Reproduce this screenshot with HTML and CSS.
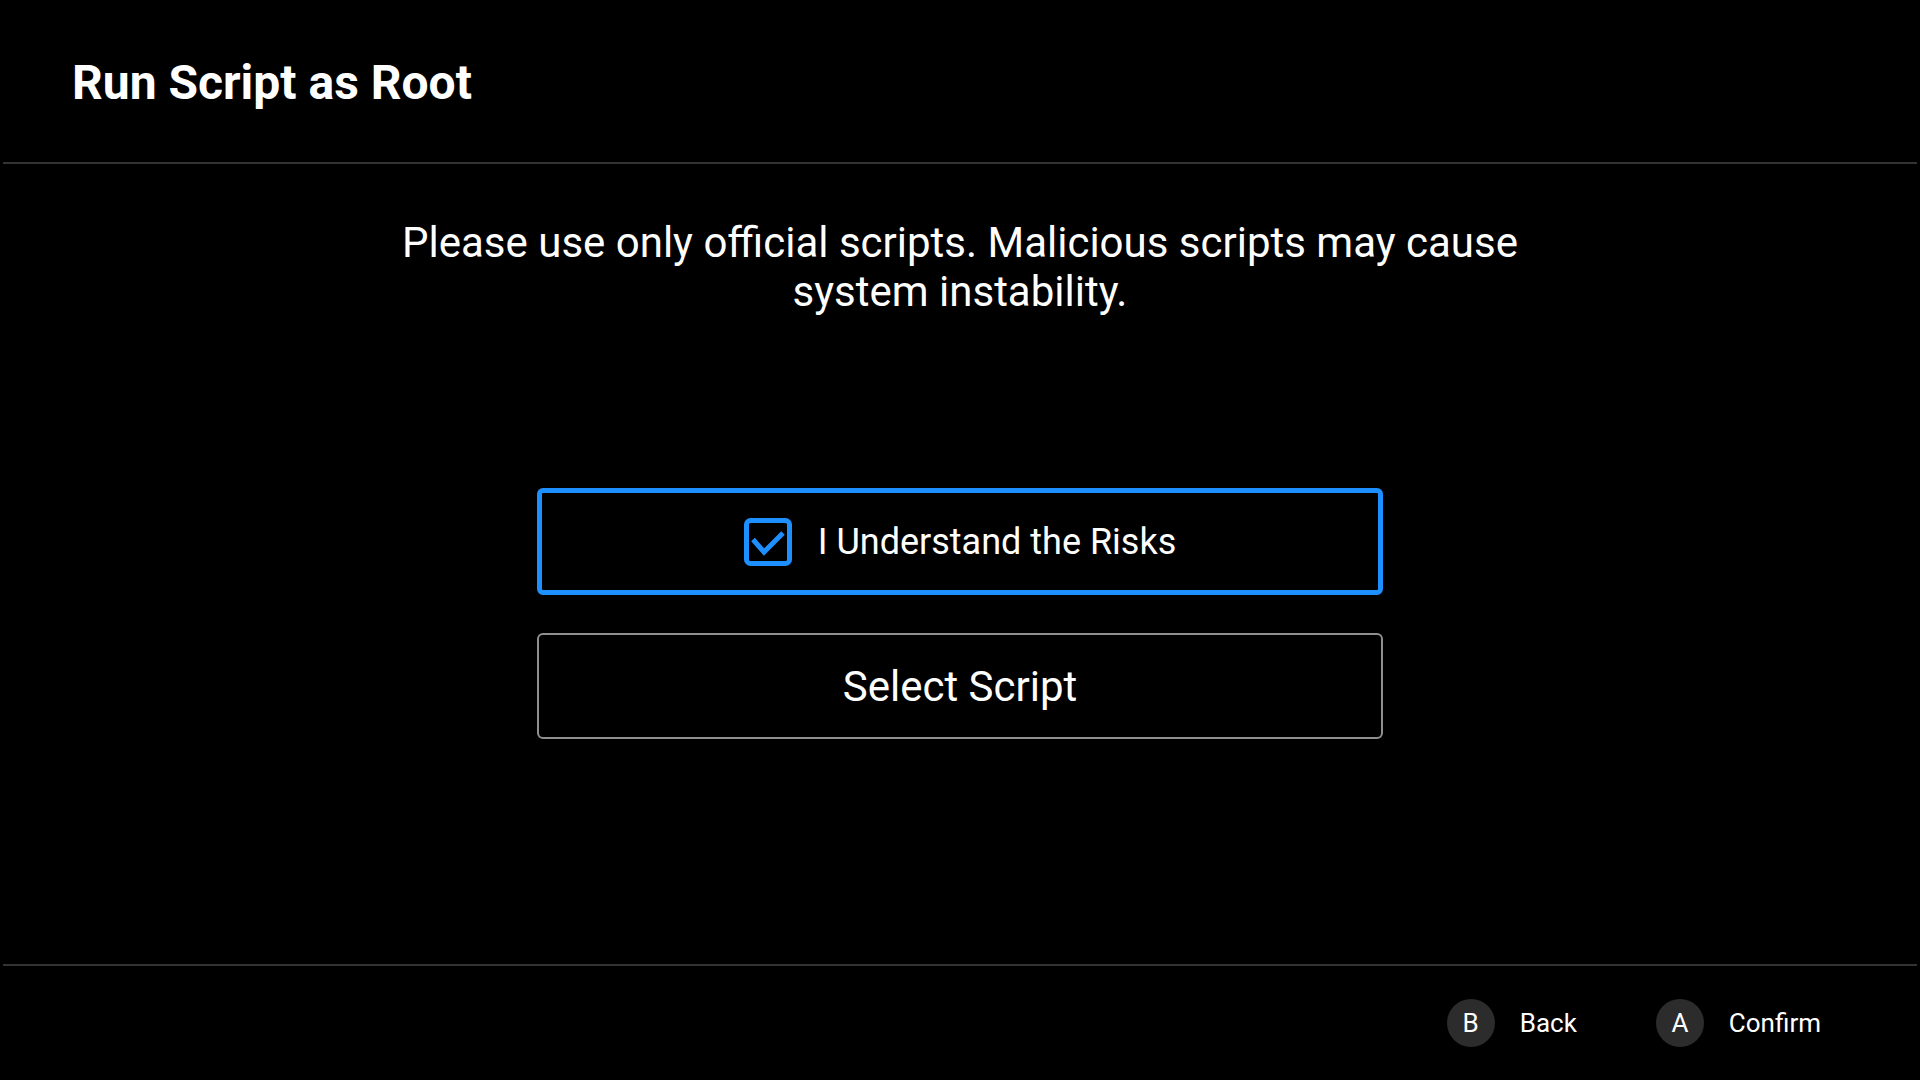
FILE: index.html
```html
<!DOCTYPE html>
<html lang="en">
<head>
    <meta charset="UTF-8">
    <meta name="viewport" content="width=device-width, initial-scale=1.0">
    <title>Run Script as Root</title>
    <link rel="stylesheet" href="styles.css">
</head>
<body>
    <div class="screen">
        <div class="header">
            <h1>Run Script as Root</h1>
        </div>

        <div class="content">
            <p class="warning">Please use only official scripts. Malicious scripts may cause system instability.</p>

            <div class="options">
                <button class="option focused">
                    <svg class="checkbox" width="48" height="48" viewBox="0 0 48 48">
                        <rect x="2.5" y="2.5" width="43" height="43" rx="4" fill="none" stroke="#1e8fff" stroke-width="5"/>
                        <polyline points="9,21.5 20,34 39,15" fill="none" stroke="#1e8fff" stroke-width="5"/>
                    </svg>
                    <span>I Understand the Risks</span>
                </button>
                <button class="option big">Select Script</button>
            </div>
        </div>

        <div class="footer">
            <div class="hint"><span class="key">B</span>Back</div>
            <div class="hint"><span class="key">A</span>Confirm</div>
        </div>
    </div>
</body>
</html>
```
FILE: styles.css
```css
body {
    margin: 0;
    background: #000;
    color: #fff;
    font-family: Roboto, "Noto Sans", sans-serif;
}
.screen {
    width: 1920px;
    height: 1080px;
    display: flex;
    flex-direction: column;
}
.header {
    height: 164px;
    margin: 0 3px;
    border-bottom: 2px solid #333;
    box-sizing: border-box;
}
.header h1 {
    margin: 0;
    padding: 56px 0 0 69px;
    font-size: 48px;
    line-height: 54px;
    font-weight: 700;
}
.content {
    flex: 1;
    display: flex;
    flex-direction: column;
    align-items: center;
}
.warning {
    max-width: 1160px;
    margin: 54px 0 0;
    text-align: center;
    font-size: 42px;
    line-height: 49px;
}
.options {
    margin-top: 172px;
    display: flex;
    flex-direction: column;
    gap: 38px;
}
.option {
    width: 846px;
    height: 107px;
    background: #000;
    color: #fff;
    font-family: inherit;
    border: 2px solid #8f8f8f;
    border-radius: 6px;
    display: flex;
    align-items: center;
    justify-content: center;
    gap: 26px;
    font-size: 36px;
    padding: 0;
    box-sizing: border-box;
}
.option.focused {
    border: 5px solid #1e8fff;
}
.option.big {
    font-size: 42px;
    height: 106px;
}
.checkbox {
    display: block;
}
.footer {
    height: 116px;
    margin: 0 3px;
    border-top: 2px solid #333;
    box-sizing: border-box;
    display: flex;
    justify-content: flex-end;
    align-items: center;
    gap: 79px;
    padding-right: 96px;
}
.hint {
    display: flex;
    align-items: center;
    gap: 25px;
    font-size: 26px;
}
.key {
    width: 48px;
    height: 48px;
    border-radius: 50%;
    background: #2c2c2c;
    display: flex;
    align-items: center;
    justify-content: center;
}
```
